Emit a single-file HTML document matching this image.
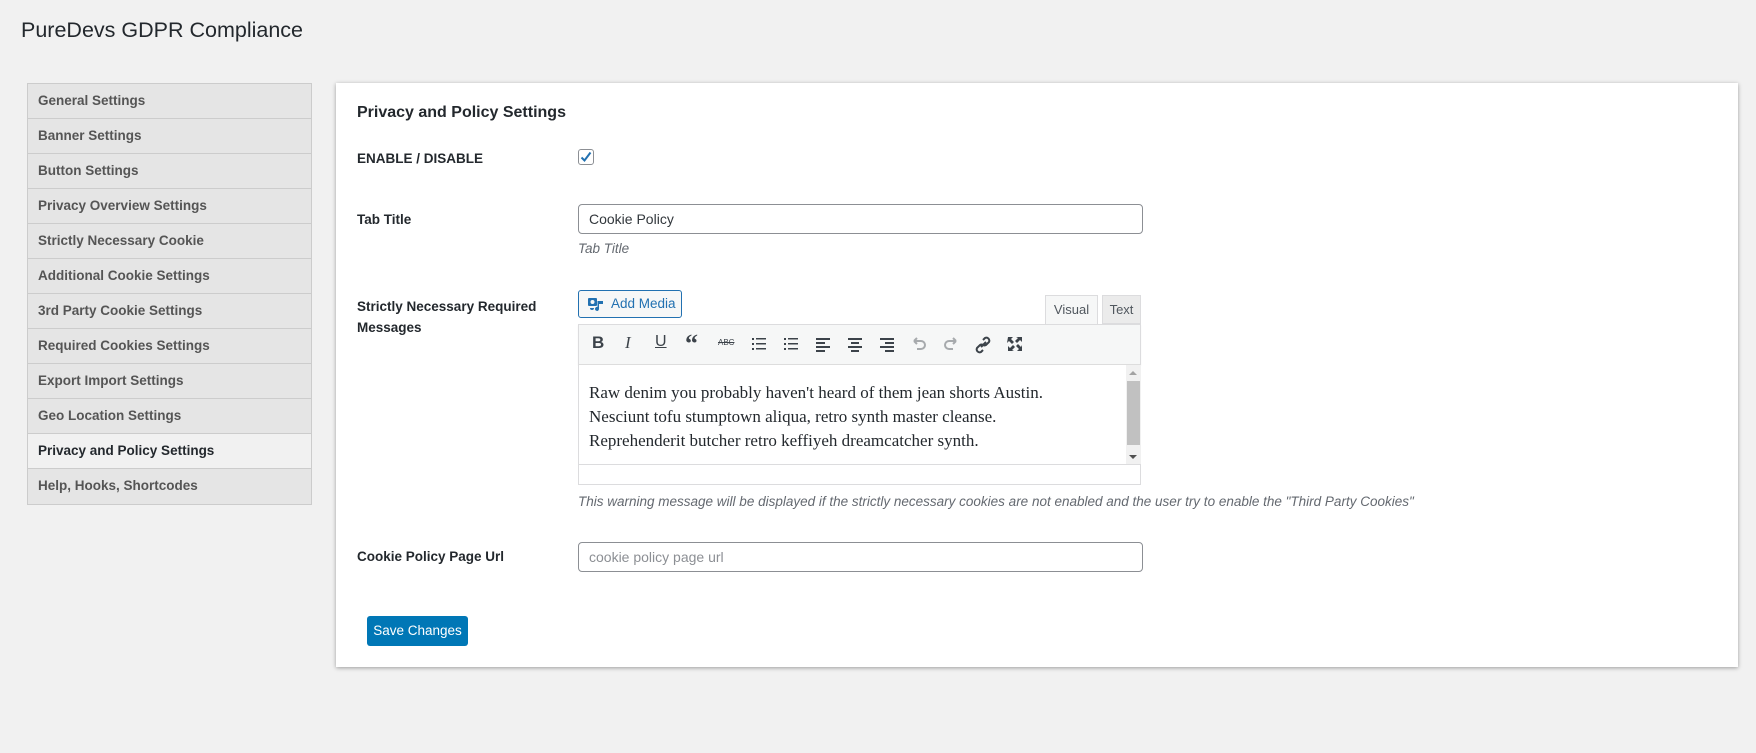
<!DOCTYPE html>
<html><head><meta charset="utf-8"><style>
*{box-sizing:border-box;margin:0;padding:0}
body{width:1756px;height:753px;background:#f1f1f1;font-family:"Liberation Sans",sans-serif;color:#23282d;position:relative;overflow:hidden}
.a{position:absolute}
h1{position:absolute;left:21px;top:18px;font-size:21.5px;font-weight:400;color:#23282d}
.side{left:27px;top:83px;width:285px;border:1px solid #ccc;background:#e5e5e5}
.side div{height:35px;line-height:34px;border-bottom:1px solid #ccc;padding-left:10px;font-size:13.5px;font-weight:600;color:#555}
.side div:last-child{border-bottom:0}
.side .on{background:#f1f1f1;color:#23282d}
.panel{left:336px;top:83px;width:1402px;height:584px;background:#fff;box-shadow:0 1px 4px rgba(0,0,0,.35)}
.lbl{font-size:13.5px;font-weight:bold;color:#23282d;left:357px}
.inp{left:578px;width:565px;height:30px;border:1px solid #8c8f94;border-radius:4px;font-size:14px;padding-left:10px;line-height:28px;color:#32373c}
.desc{font-style:italic;color:#646970;font-size:13.5px}
.tb svg{position:absolute;top:11px}
</style></head><body>
<h1>PureDevs GDPR Compliance</h1>
<div class="a side">
<div>General Settings</div><div>Banner Settings</div><div>Button Settings</div><div>Privacy Overview Settings</div><div>Strictly Necessary Cookie</div><div>Additional Cookie Settings</div><div>3rd Party Cookie Settings</div><div>Required Cookies Settings</div><div>Export Import Settings</div><div>Geo Location Settings</div><div class="on">Privacy and Policy Settings</div><div>Help, Hooks, Shortcodes</div>
</div>
<div class="a panel"></div>
<div class="a" style="left:357px;top:104px;font-size:16px;font-weight:bold;color:#23282d">Privacy and Policy Settings</div>
<div class="a lbl" style="top:151px">ENABLE / DISABLE</div>
<div class="a" style="left:578px;top:149px;width:16px;height:16px;border:1px solid #8c8f94;border-radius:3px;background:#fff"><svg width="14" height="14" viewBox="0 0 14 14" style="position:absolute;left:0;top:0"><path d="M2.5 7.5 L5.5 10.5 L11.5 2.5" stroke="#2271b1" stroke-width="2" fill="none"/></svg></div>
<div class="a lbl" style="top:212px">Tab Title</div>
<div class="a inp" style="top:204px">Cookie Policy</div>
<div class="a desc" style="left:578px;top:241px">Tab Title</div>
<div class="a lbl" style="top:296px;line-height:21px">Strictly Necessary Required<br>Messages</div>
<div class="a" style="left:578px;top:290px;width:104px;height:28px;border:1px solid #2271b1;border-radius:3px;background:#f6f7f7;color:#2271b1;font-size:13.5px;line-height:26px;padding-left:32px">Add Media
<svg class="a" style="left:8px;top:6px" width="18" height="16" viewBox="0 0 18 16"><rect x="1" y="1" width="9" height="8" rx="1" fill="#2271b1"/><circle cx="5.5" cy="5" r="2" fill="#f6f7f7"/><path d="M12 4v8a2 2 0 1 1-1.5-2V4z M12 4h4v3h-4" fill="#2271b1"/><path d="M3 11a2 2 0 1 0 4 0" fill="#2271b1"/></svg></div>
<div class="a" style="left:1045px;top:295px;width:53px;height:31px;background:#f6f7f7;border:1px solid #dcdcde;border-bottom:0;font-size:13px;color:#50575e;text-align:center;line-height:28px">Visual</div>
<div class="a" style="left:1102px;top:295px;width:39px;height:29px;background:#ebebeb;border:1px solid #dcdcde;font-size:13px;color:#50575e;text-align:center;line-height:28px">Text</div>
<div class="a tb" style="left:578px;top:324px;width:563px;height:41px;background:#f6f7f7;border:1px solid #dcdcde;border-bottom:1px solid #ddd;box-shadow:0 1px 1px rgba(0,0,0,.06)">
<div class="a" style="left:13px;top:8px;font-weight:bold;font-size:17px;color:#3c434a">B</div>
<div class="a" style="left:46px;top:8px;font-style:italic;font-size:17px;font-family:'Liberation Serif',serif;color:#3c434a">I</div>
<div class="a" style="left:76px;top:8px;text-decoration:underline;font-size:16px;color:#3c434a">U</div>
<div class="a" style="left:106px;top:4px;font-weight:bold;font-size:26px;font-family:'Liberation Serif',serif;color:#3c434a">“</div>
<div class="a" style="left:139px;top:13px;font-size:8px;color:#3c434a;text-decoration:line-through">ABC</div>
<svg style="left:172px" width="16" height="16"><g fill="#3c434a"><rect x="1" y="2" width="2" height="2"/><rect x="1" y="7" width="2" height="2"/><rect x="1" y="12" width="2" height="2"/><rect x="5" y="2" width="10" height="1.5"/><rect x="5" y="7" width="10" height="1.5"/><rect x="5" y="12" width="10" height="1.5"/></g></svg>
<svg style="left:204px" width="16" height="16"><g fill="#3c434a"><rect x="1" y="2" width="2" height="2"/><rect x="1" y="7" width="2" height="2"/><rect x="1" y="12" width="2" height="2"/><rect x="5" y="2" width="10" height="1.5"/><rect x="5" y="7" width="10" height="1.5"/><rect x="5" y="12" width="10" height="1.5"/></g></svg>
<svg style="left:236px" width="16" height="16"><g fill="#3c434a"><rect x="1" y="2" width="14" height="2"/><rect x="1" y="6" width="9" height="2"/><rect x="1" y="10" width="14" height="2"/><rect x="1" y="14" width="9" height="2"/></g></svg>
<svg style="left:268px" width="16" height="16"><g fill="#3c434a"><rect x="1" y="2" width="14" height="2"/><rect x="4" y="6" width="8" height="2"/><rect x="1" y="10" width="14" height="2"/><rect x="4" y="14" width="8" height="2"/></g></svg>
<svg style="left:300px" width="16" height="16"><g fill="#3c434a"><rect x="1" y="2" width="14" height="2"/><rect x="6" y="6" width="9" height="2"/><rect x="1" y="10" width="14" height="2"/><rect x="6" y="14" width="9" height="2"/></g></svg>
<svg style="left:332px" width="16" height="16"><path d="M3 5h7a4 4 0 0 1 0 8H6 M3 5l3-3 M3 5l3 3" stroke="#a7aaad" stroke-width="2" fill="none"/></svg>
<svg style="left:364px" width="16" height="16"><path d="M13 5H6a4 4 0 0 0 0 8h4 M13 5l-3-3 M13 5l-3 3" stroke="#a7aaad" stroke-width="2" fill="none"/></svg>
<svg style="left:395px" width="18" height="18"><path d="M7 11l5-5 M9 4l2-2a3 3 0 0 1 4 4l-3 3a3 3 0 0 1-3 0 M9 14l-2 2a3 3 0 0 1-4-4l3-3a3 3 0 0 1 3 0" stroke="#3c434a" stroke-width="2" fill="none"/></svg>
<svg style="left:427px" width="18" height="16"><path d="M2 1h5L5 3l3 3-2 2-3-3-2 2z M16 1v5l-2-2-3 3-2-2 3-3-2-1z M2 15v-5l2 2 3-3 2 2-3 3 2 1z M16 15h-5l2-2-3-3 2-2 3 3 1-2z" fill="#3c434a"/></svg>
</div>
<div class="a" style="left:578px;top:365px;width:563px;height:120px;border:1px solid #dcdcde;border-top:0;background:#fff">
<div class="a" style="left:10px;top:16px;font-family:'Liberation Serif',serif;font-size:17px;line-height:24px;color:#23282d">Raw denim you probably haven't heard of them jean shorts Austin.<br>Nesciunt tofu stumptown aliqua, retro synth master cleanse.<br>Reprehenderit butcher retro keffiyeh dreamcatcher synth.</div>
<div class="a" style="left:547px;top:0;width:15px;height:100px;background:#f1f1f1"><div class="a" style="left:1px;top:16px;width:13px;height:64px;background:#c1c1c1"></div><div class="a" style="left:3px;top:6px;border:4px solid transparent;border-bottom-color:#a3a3a3;border-top:0"></div><div class="a" style="left:3px;top:90px;border:4px solid transparent;border-top-color:#505050;border-bottom:0"></div></div>
<div class="a" style="left:0;top:99px;width:562px;border-top:1px solid #dcdcde"></div>
</div>
<div class="a desc" style="left:578px;top:494px">This warning message will be displayed if the strictly necessary cookies are not enabled and the user try to enable the "Third Party Cookies"</div>
<div class="a lbl" style="top:549px">Cookie Policy Page Url</div>
<div class="a inp" style="top:542px;color:#8c8f94">cookie policy page url</div>
<div class="a" style="left:367px;top:616px;width:101px;height:30px;background:#0077b6;border-radius:3px;color:#fff;font-size:13.5px;text-align:center;line-height:30px">Save Changes</div>
</body></html>
